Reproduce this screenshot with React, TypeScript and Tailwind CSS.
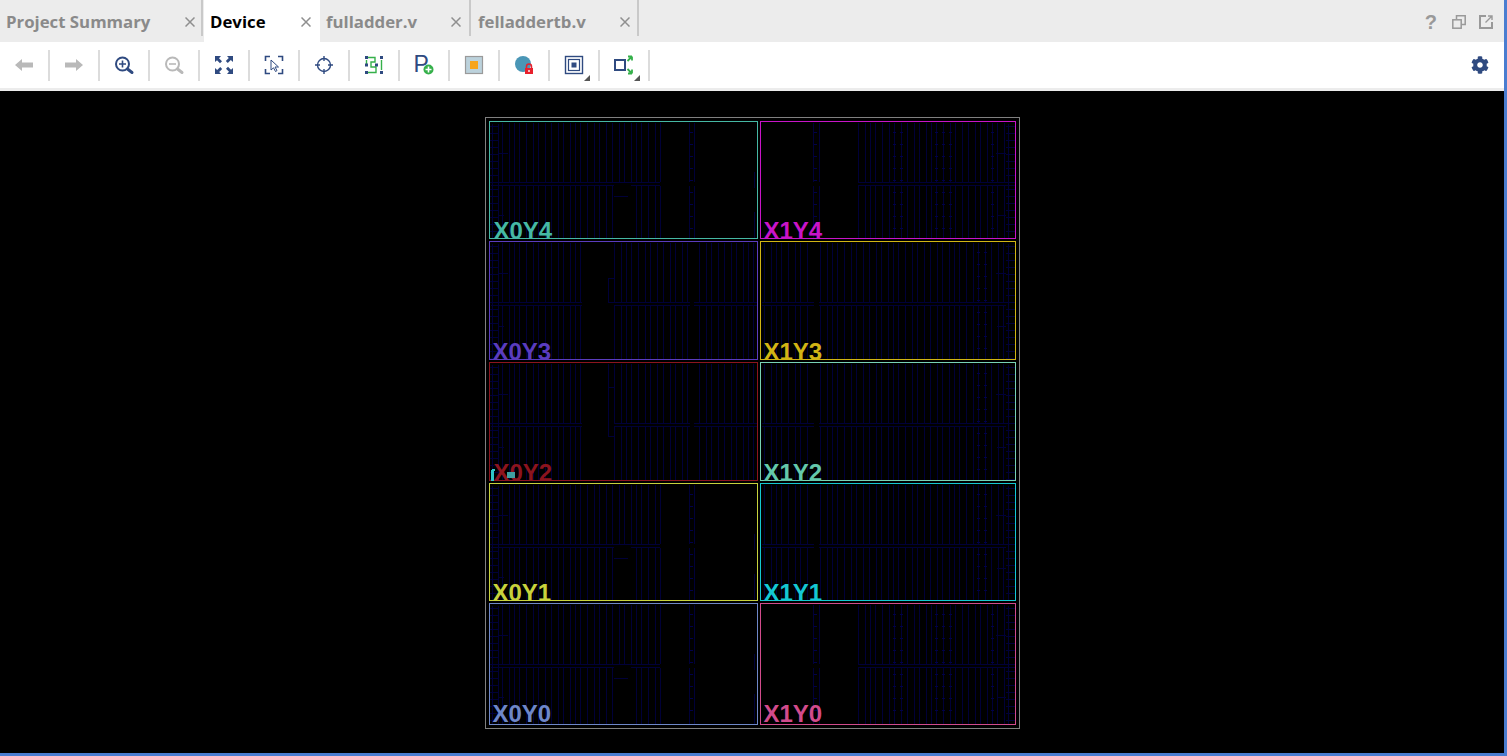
import React from 'react';
import { FaCog } from 'react-icons/fa';

const NAVY = '#2f4a80';
const GREEN = '#35b04a';
const GRAY = '#b9b9b9';

// column positions inside a clock region, stepped like the fabric columns
function columns(start: number, end: number) {
  const steps = [7, 5, 5, 7, 7, 5, 7, 6, 7, 5];
  const xs: number[] = [];
  let x = start;
  let i = 0;
  while (x <= end) {
    xs.push(x);
    x += steps[i % steps.length];
    i++;
  }
  return xs;
}

type Kind = 'A' | 'B' | 'C' | 'E' | 'D';

function wirePaths(kind: Kind, h: number) {
  let thin = '';
  let ticks = '';
  const bar = 60;
  const vert = (x: number, y1: number, y2: number) => {
    thin += `M${x}.5 ${y1}V${y2}`;
  };
  const full = (x: number) => {
    vert(x, 1, bar);
    vert(x, bar + 4, h - 1);
  };
  const hbar = (x1: number, x2: number) => {
    thin += `M${x1} ${bar}.5H${x2}M${x1} ${bar + 3}.5H${x2}`;
  };
  const tickCol = (x: number) => {
    for (let y = 10; y < h - 4; y += 12) ticks += `M${x} ${y}.5h3`;
  };
  const ladder = (x: number, w: number) => {
    for (let y = 4; y < h - 2; y += 7) thin += `M${x} ${y}.5h${w}`;
    vert(x + 2, 2, h - 2);
    vert(x + w - 1, 2, h - 2);
  };

  if (kind === 'A') {
    columns(12, 170).forEach((x) => {
      vert(x, 1, bar);
      if (x < 124 || x > 141) vert(x, bar + 4, h - 1);
      if (x % 7 === 0 && (x < 124 || x > 141)) tickCol(x - 1);
    });
    [199, 204].forEach(full);
    tickCol(200);
    vert(264, 50, 66);
    vert(264, 90, h - 1);
    hbar(1, 124);
    hbar(141, 170);
    thin += `M124 ${bar}.5H141M124 ${bar + 14}.5H138`;
    ladder(0, 9);
    thin += `M8 31.5h10M8 93.5h6`;
  }
  if (kind === 'B') {
    [52, 58].forEach(full);
    tickCol(53);
    columns(97, 244).forEach((x) => {
      full(x);
      if (x % 7 === 0) tickCol(x - 1);
    });
    hbar(97, 256);
    ladder(245, 10);
    thin += `M235 31.5h10M236 93.5h9`;
  }
  if (kind === 'C' || kind === 'E') {
    columns(12, 92).forEach((x) => {
      full(x);
      if (x % 7 === 0) tickCol(x - 1);
    });
    columns(124, 267).forEach((x) => {
      if (x > 198 && x < 205) return;
      full(x);
      if (x % 7 === 0) tickCol(x - 1);
    });
    hbar(1, 92);
    hbar(124, 200);
    hbar(204, 267);
    ladder(0, 9);
    thin += `M8 31.5h10M8 84.5h6`;
    if (kind === 'C') {
      vert(118, 36, bar);
      thin += `M118 36.5h6M118 ${bar}.5h6`;
    } else {
      vert(118, 1, 24);
      vert(118, 24, 73);
      thin += `M118 24.5h6M118 73.5h6`;
    }
  }
  if (kind === 'D') {
    columns(3, 50).concat(columns(59, 244)).forEach((x) => {
      full(x);
      if (x % 7 === 0) tickCol(x - 1);
    });
    hbar(1, 53);
    hbar(58, 245);
    ladder(245, 10);
    thin += `M235 31.5h10M236 84.5h9`;
  }
  return { thin, ticks };
}

function Wires({ kind, h }: { kind: Kind; h: number }) {
  const { thin, ticks } = wirePaths(kind, h);
  return (
    <svg className="absolute inset-0 w-full h-full" shapeRendering="crispEdges" fill="none">
      <path d={thin} stroke="#000038" strokeWidth="1" />
      <path d={ticks} stroke="#00004a" strokeWidth="1" />
    </svg>
  );
}

function Region({
  name,
  kind,
  h,
  borderClass,
  textClass,
  labelClass,
  children,
}: {
  name: string;
  kind: Kind;
  h: number;
  borderClass: string;
  textClass: string;
  labelClass: string;
  children?: React.ReactNode;
}) {
  return (
    <div className={`relative border ${borderClass}`}>
      <Wires kind={kind} h={h} />
      <span
        className={`absolute text-[24px] leading-[30px] font-bold font-['Liberation_Sans',sans-serif] ${labelClass} ${textClass}`}
      >
        {name}
      </span>
      {children}
    </div>
  );
}

function Icon({ children }: { children: React.ReactNode }) {
  return (
    <svg width="24" height="24" viewBox="0 0 24 24" fill="none" className="overflow-visible">
      {children}
    </svg>
  );
}

function ToolButton({ children, corner }: { children: React.ReactNode; corner?: boolean }) {
  return (
    <div className="relative w-[50px] h-[31px] flex items-center justify-center border-r-2 border-[#dcdcdc]">
      {children}
      {corner && (
        <div className="absolute right-[8px] bottom-0 w-0 h-0 border-l-[6px] border-l-transparent border-b-[6px] border-b-[#555555]" />
      )}
    </div>
  );
}

function CloseX() {
  return (
    <svg width="10" height="10" viewBox="0 0 10 10" className="shrink-0">
      <path d="M0.5 0.5L9.5 9.5M9.5 0.5L0.5 9.5" stroke="#8f8f8f" strokeWidth="1.5" />
    </svg>
  );
}

function TabDivider() {
  return <div className="w-[2px] h-[36px] self-start bg-[#c9c9c9]" />;
}

export default function App() {
  return (
    <div className="w-[1507px] h-[756px] overflow-hidden bg-[#4a7dd0] pr-[3px] pb-[3px] font-['Open_Sans',sans-serif]">
      <div className="h-full flex flex-col bg-black">
        <div className="h-[42px] flex bg-[#ececec] text-[16.8px] font-bold text-[#8a8a8a]">
          <div className="w-[201px] flex items-center justify-between pt-[2px] pl-[6px] pr-[6px]">
            <span>Project Summary</span>
            <CloseX />
          </div>
          <TabDivider />
          <div className="w-[116px] ml-px flex items-center justify-between bg-white pt-[2px] pl-[6px] pr-[9px] text-black">
            <span>Device</span>
            <CloseX />
          </div>
          <div className="w-[149px] flex items-center justify-between pt-[2px] pl-[6px] pr-[8px]">
            <span>fulladder.v</span>
            <CloseX />
          </div>
          <TabDivider />
          <div className="w-[166px] flex items-center justify-between pt-[2px] pl-[7px] pr-[7px]">
            <span>felladdertb.v</span>
            <CloseX />
          </div>
          <TabDivider />
          <div className="ml-auto flex items-center gap-[13px] pt-[2px] pr-[11px]">
            <span className="mr-[2px] ml-[2px] text-[20px] font-bold text-[#999999] font-['Liberation_Sans',sans-serif]">?</span>
            <svg width="14" height="14" viewBox="0 0 14 14" fill="none" stroke="#999999" strokeWidth="1.5">
              <path d="M4.5 4V0.8H13.2V9.5H9.5" />
              <rect x="0.8" y="4.8" width="8.4" height="8.4" />
            </svg>
            <svg width="14" height="14" viewBox="0 0 14 14" fill="none" stroke="#999999" strokeWidth="2">
              <path d="M7 1H1V13H13V7" />
              <path d="M6.5 7.5L13 1M9 1H13V5" strokeWidth="1.4" />
            </svg>
          </div>
        </div>

        <div className="h-[46px] flex items-center bg-white">
          <ToolButton>
            <Icon>
              <path d="M3 12L10 6V9.5H21V14.5H10V18Z" fill={GRAY} />
            </Icon>
          </ToolButton>
          <ToolButton>
            <Icon>
              <path d="M21 12L14 6V9.5H3V14.5H14V18Z" fill={GRAY} />
            </Icon>
          </ToolButton>
          <ToolButton>
            <Icon>
              <circle cx="10.5" cy="11" r="6.5" stroke={NAVY} strokeWidth="2" />
              <path d="M7 11H14M10.5 7.5V14.5" stroke={NAVY} strokeWidth="1.6" />
              <path d="M15.5 16L20 19.5" stroke={NAVY} strokeWidth="3" strokeLinecap="round" />
            </Icon>
          </ToolButton>
          <ToolButton>
            <Icon>
              <circle cx="10.5" cy="11" r="6.5" stroke={GRAY} strokeWidth="2" />
              <path d="M7 11H14" stroke={GRAY} strokeWidth="1.6" />
              <path d="M15.5 16L20 19.5" stroke={GRAY} strokeWidth="3" strokeLinecap="round" />
            </Icon>
          </ToolButton>
          <ToolButton>
            <Icon>
              <path
                d="M3 3H9L7 5.2L10 8.2L8 10.2L5 7.2L3 9ZM21 3V9L18.8 7L15.8 10L13.8 8L16.8 5L15 3ZM3 21V15L5.2 17L8.2 14L10.2 16L7.2 19L9 21ZM21 21H15L17 18.8L14 15.8L16 13.8L19 16.8L21 15Z"
                fill={NAVY}
              />
            </Icon>
          </ToolButton>
          <ToolButton>
            <Icon>
              <path d="M3.5 8V3.5H8M16 3.5H20.5V8M3.5 16V20.5H8M16 20.5H20.5V16" stroke={NAVY} strokeWidth="1.6" />
              <path d="M9 7L9 17L11.5 14.8L13.5 18.5L15 17.6L13 14H16.5Z" fill="white" stroke={NAVY} strokeWidth="1" />
            </Icon>
          </ToolButton>
          <ToolButton>
            <Icon>
              <circle cx="12" cy="12" r="6.5" stroke={NAVY} strokeWidth="1.4" />
              <path d="M12 3V8M12 16V21M3 12H8M16 12H21" stroke={NAVY} strokeWidth="1.4" />
            </Icon>
          </ToolButton>
          <ToolButton>
            <Icon>
              <path d="M6 4.5H13V9H9V14H14V19.5H6M4.5 7V11M19.5 7V17" stroke={GREEN} strokeWidth="1.4" />
              <path d="M3 3H6V6H3ZM3 10.5H6V13.5H3ZM3 18H6V21H3ZM18 3H21V6H18ZM18 18H21V21H18ZM13 10.5H16V13.5H13Z" fill={NAVY} />
            </Icon>
          </ToolButton>
          <ToolButton>
            <Icon>
              <text x="1.5" y="19" fontSize="23" fontFamily="Liberation Sans, sans-serif" fill={NAVY}>
                P
              </text>
              <circle cx="16.5" cy="16.5" r="5" fill={GREEN} />
              <path d="M13.5 16.5H19.5M16.5 13.5V19.5" stroke="white" strokeWidth="1.6" />
            </Icon>
          </ToolButton>
          <ToolButton>
            <Icon>
              <rect x="3.5" y="3.5" width="17" height="17" fill="#bcd2dc" stroke="#9a9a9a" strokeWidth="1.2" />
              <rect x="8" y="8" width="8" height="8" fill="#f7a51c" />
            </Icon>
          </ToolButton>
          <ToolButton>
            <Icon>
              <circle cx="11" cy="11" r="8" fill="#4a96b6" />
              <path d="M14.5 15V13.5A2.5 2.5 0 0 1 19.5 13.5V15" stroke="#e8202c" strokeWidth="1.5" />
              <rect x="13" y="15" width="8" height="6" fill="#e8202c" />
              <rect x="16.3" y="17" width="1.4" height="2" fill="white" />
            </Icon>
          </ToolButton>
          <ToolButton corner>
            <Icon>
              <rect x="3.5" y="3.5" width="17" height="17" stroke={NAVY} strokeWidth="1.4" />
              <rect x="6.5" y="6.5" width="11" height="11" stroke={NAVY} strokeWidth="1.2" />
              <rect x="9.5" y="9.5" width="5" height="5" fill={NAVY} />
            </Icon>
          </ToolButton>
          <ToolButton corner>
            <Icon>
              <rect x="3" y="7" width="10" height="10" stroke={NAVY} strokeWidth="2" />
              <path d="M15.5 8L20 3.5M20 3.5H16M20 3.5V7.5" stroke={GREEN} strokeWidth="1.8" />
              <path d="M15.5 16L20 20.5M20 20.5H16M20 20.5V16.5" stroke={GREEN} strokeWidth="1.8" />
            </Icon>
          </ToolButton>
          <div className="ml-auto pr-[15px]">
            <FaCog size={18} color={NAVY} />
          </div>
        </div>

        <div className="h-[3px] bg-[#ececec]" />

        <div className="flex-1 flex justify-center pt-[26px]">
          <div className="w-[535px] h-[612px] border border-[#808080] p-[3px] grid grid-cols-[269px_256px] grid-rows-[118px_119px_119px_118px_122px] gap-[2px]">
            <Region name="X0Y4" kind="A" h={118} labelClass="left-[4px] bottom-[-8px]" borderClass="border-[#45b8a4]" textClass="text-[#45b8a4]" />
            <Region name="X1Y4" kind="B" h={118} labelClass="left-[3px] bottom-[-8px]" borderClass="border-[#c814c8]" textClass="text-[#c814c8]" />
            <Region name="X0Y3" kind="C" h={119} labelClass="left-[3px] bottom-[-8px]" borderClass="border-[#5a3cbe]" textClass="text-[#5a3cbe]" />
            <Region name="X1Y3" kind="D" h={119} labelClass="left-[3px] bottom-[-8px]" borderClass="border-[#d2b414]" textClass="text-[#d2b414]" />
            <Region name="X0Y2" kind="E" h={119} labelClass="left-[4px] bottom-[-8px]" borderClass="border-[#8c141e]" textClass="text-[#8c141e]">
              <svg className="absolute left-0 bottom-[-2px]" width="26" height="14" shapeRendering="crispEdges">
                <path d="M1 13V3L2 1H5V3H4V13Z" fill="#30c8c8" />
                <rect x="17" y="4" width="8" height="6" fill="#3f9fa0" />
              </svg>
            </Region>
            <Region name="X1Y2" kind="D" h={119} labelClass="left-[3px] bottom-[-8px]" borderClass="border-[#78d2b4]" textClass="text-[#64c8aa]" />
            <Region name="X0Y1" kind="A" h={118} labelClass="left-[3px] bottom-[-8px]" borderClass="border-[#c8d23c]" textClass="text-[#c8d23c]" />
            <Region name="X1Y1" kind="D" h={118} labelClass="left-[3px] bottom-[-8px]" borderClass="border-[#14c8d2]" textClass="text-[#14c8d2]" />
            <Region name="X0Y0" kind="A" h={122} labelClass="left-[3px] bottom-[-5px]" borderClass="border-[#6e87c8]" textClass="text-[#6e87c8]" />
            <Region name="X1Y0" kind="B" h={122} labelClass="left-[3px] bottom-[-5px]" borderClass="border-[#d24b8c]" textClass="text-[#d24b8c]" />
          </div>
        </div>
      </div>
    </div>
  );
}
